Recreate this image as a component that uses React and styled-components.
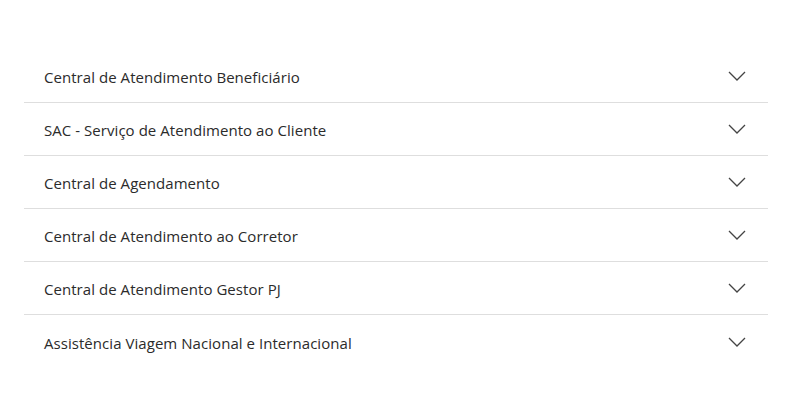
import React from 'react'
import styled, { createGlobalStyle } from 'styled-components'

const GlobalStyle = createGlobalStyle`
  body {
    margin: 0;
    background: #fff;
    font-family: "Open Sans", "Noto Sans", sans-serif;
  }
`

const Page = styled.div`
  padding: 50px 25px 0 24px;
`

const List = styled.div`
  display: flex;
  flex-direction: column;
`

const Item = styled.button`
  display: flex;
  align-items: center;
  justify-content: space-between;
  width: 100%;
  height: 53px;
  padding: 0 22px 0 20px;
  border: 0;
  border-bottom: ${({ $last }) => ($last ? '0' : '1px solid #dedede')};
  background: transparent;
  font-family: inherit;
  font-size: 15px;
  color: #2b2b2b;
  text-align: left;
  cursor: pointer;
`

const Label = styled.span`
  padding-top: 2px;
  letter-spacing: 0.05px;
`

const Chevron = () => (
  <svg width="18" height="10" viewBox="0 0 18 10" fill="none">
    <path d="M1 1l8 8 8-8" stroke="#444" strokeWidth="1.3" />
  </svg>
)

const items = [
  'Central de Atendimento Beneficiário',
  'SAC - Serviço de Atendimento ao Cliente',
  'Central de Agendamento',
  'Central de Atendimento ao Corretor',
  'Central de Atendimento Gestor PJ',
  'Assistência Viagem Nacional e Internacional',
]

const App = () => (
  <Page>
    <GlobalStyle />
    <List>
      {items.map((label, i) => (
        <Item key={label} type="button" $last={i === items.length - 1}>
          <Label>{label}</Label>
          <Chevron />
        </Item>
      ))}
    </List>
  </Page>
)

export default App
